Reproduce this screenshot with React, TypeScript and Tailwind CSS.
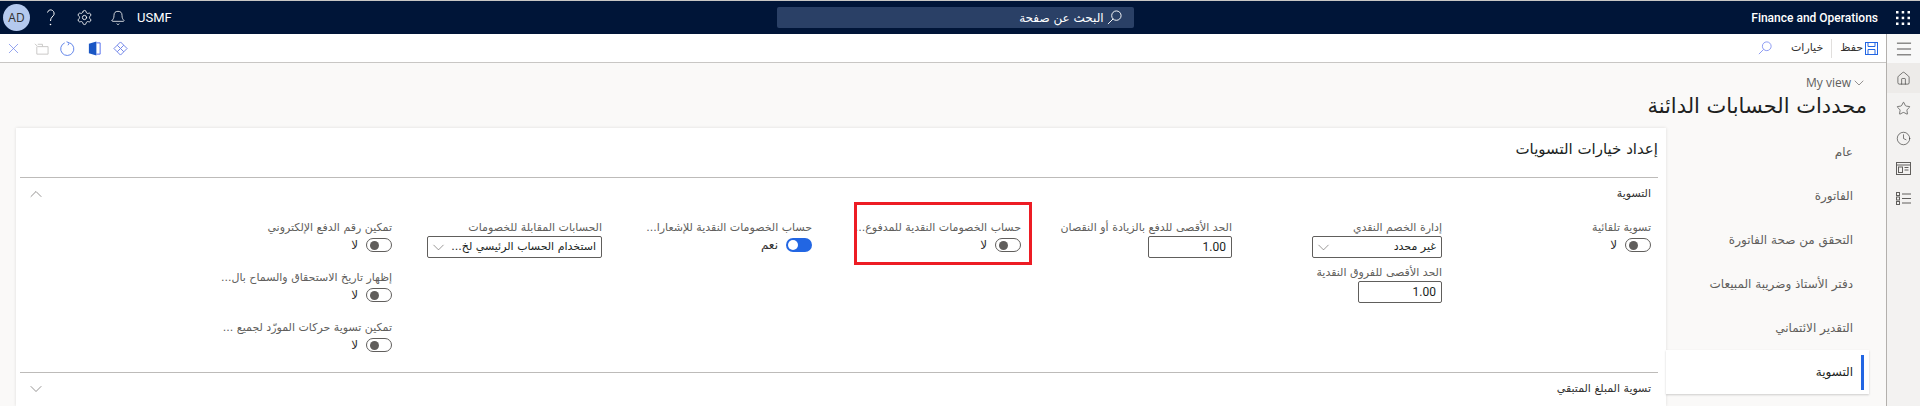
import { Bell, ChevronDown, ChevronUp, Clock, Home, Menu, Settings, Star, X } from "lucide-react"

const navItems = ["عام", "الفاتورة", "التحقق من صحة الفاتورة", "دفتر الأستاذ وضريبة المبيعات", "التقدير الائتماني"]

function SearchGlyph({ className }: { className: string }) {
  return (
    <svg viewBox="0 0 16 16" className={className} fill="none" stroke="currentColor">
      <circle cx="10" cy="6" r="5" />
      <path d="M6.500 9.500L1 15" />
    </svg>
  )
}

function Label({ text }: { text: string }) {
  return <div className="h-[17px] whitespace-nowrap text-[11px] leading-[17px] text-[#605e5c]">{text}</div>
}

function ToggleField({ label, on = false }: { label: string; on?: boolean }) {
  return (
    <div className="mb-[15px]">
      <Label text={label} />
      <div className="flex h-[18px] items-center gap-[8px]">
        {on ? (
          <span className="flex h-[14px] w-[26px] items-center justify-end rounded-full bg-[#2266e3] pr-[12px] pl-[2px]">
            <span className="size-[10px] shrink-0 rounded-full bg-white" />
          </span>
        ) : (
          <span className="flex h-[14px] w-[26px] items-center justify-end rounded-full border border-[#605e5c] bg-white pl-[3px]">
            <span className="mr-auto size-[9px] rounded-full bg-[#605e5c]" />
          </span>
        )}
        <span className="text-[12px] leading-none text-[#323130]">{on ? "نعم" : "لا"}</span>
      </div>
    </div>
  )
}

function InputField({ label, value }: { label: string; value: string }) {
  return (
    <div className="mb-[6px]">
      <Label text={label} />
      <div className="flex h-[22px] w-[84px] items-center rounded-[2px] border border-[#605e5c] bg-white px-[5px] font-['Roboto'] text-[12px] text-[#201f1e]">
        {value}
      </div>
    </div>
  )
}

function SelectField({ label, value, width }: { label: string; value: string; width: string }) {
  return (
    <div className="mb-[6px]">
      <Label text={label} />
      <div className={`flex h-[22px] items-center justify-between rounded-[2px] border border-[#605e5c] bg-white pr-[5px] pl-[1px] text-[11px] text-[#201f1e] ${width}`}>
        <span className="whitespace-nowrap">{value}</span>
        <ChevronDown size={19} strokeWidth={0.8} className="text-[#605e5c]" />
      </div>
    </div>
  )
}

function TopBar() {
  return (
    <div dir="ltr" className="flex h-[34px] items-center border-t border-[#c8c6c4] bg-[#001538] text-white">
      <div className="ml-[3px] flex size-[27px] items-center justify-center rounded-full bg-[#b4c9ee] font-['Open_Sans'] text-[12px] text-[#323130]">AD</div>
      <svg viewBox="0 0 10 18" className="ml-[16px] h-[18px] w-[10px]" fill="none" stroke="white" strokeWidth="1">
        <path d="M1.500 3.500C2 1.500 4 .5 5.500 1S8.500 3 8 5.500C7.500 7.500 4.500 8 4.500 12" />
        <circle cx="4.500" cy="15.500" r=".8" fill="white" stroke="none" />
      </svg>
      <Settings size={17} strokeWidth={1.2} className="ml-[20px]" />
      <Bell size={16} strokeWidth={1.2} className="ml-[17px]" />
      <span className="ml-[11px] font-['Roboto'] text-[13px]">USMF</span>
      <div className="ml-[605px] flex h-[21px] w-[357px] items-center justify-end rounded-[2px] bg-[#2a4066] pr-[12px] text-[12px]">
        <span dir="rtl">البحث عن صفحة</span>
        <SearchGlyph className="ml-[3px] size-[15px]" />
      </div>
      <span className="ml-auto font-['Roboto'] text-[12px] font-medium">Finance and Operations</span>
      <svg viewBox="0 0 14 14" className="mr-[10px] ml-[18px] size-[14px]" fill="white">
        <rect x="0" y="0" width="2.500" height="2.500" />
        <rect x="5.700" y="0" width="2.500" height="2.500" />
        <rect x="11.500" y="0" width="2.500" height="2.500" />
        <rect x="0" y="5.700" width="2.500" height="2.500" />
        <rect x="5.700" y="5.700" width="2.500" height="2.500" />
        <rect x="11.500" y="5.700" width="2.500" height="2.500" />
        <rect x="0" y="11.500" width="2.500" height="2.500" />
        <rect x="5.700" y="11.500" width="2.500" height="2.500" />
        <rect x="11.500" y="11.500" width="2.500" height="2.500" />
      </svg>
    </div>
  )
}

function Toolbar() {
  return (
    <div dir="ltr" className="flex h-[29px] items-center border-b border-[#c8c6c4] bg-white">
      <X size={17} strokeWidth={1} className="ml-[5px] text-[#6a7fe8]" />
      <svg viewBox="0 0 16 16" className="ml-[12px] size-[15px]" fill="none" stroke="#c8c6c4">
        <path d="M1 3l3 3h11v8H3V6" />
        <path d="M4 3.500h5V6" />
      </svg>
      <svg viewBox="0 0 16 16" className="ml-[11px] size-[15px]" fill="none" stroke="#5b7fe8">
        <path d="M5 2a7 7 0 1 0 5.500 0" />
        <path d="M7 .8L10 2 8.500 4.500" />
      </svg>
      <svg viewBox="0 0 16 16" className="ml-[12px] size-[15px]">
        <path d="M2 3l8-2.500v15L2 13z" fill="#1a56c4" />
        <path d="M10 2h4v12h-4" fill="none" stroke="#4f6bed" />
      </svg>
      <svg viewBox="0 0 16 16" className="ml-[11px] size-[15px]" fill="none" stroke="#6a7fe8">
        <path d="M8 1l3.500 3.500L8 8 4.500 4.500zM8 8l3.500 3.500L8 15l-3.500-3.500zM4.500 4.500L1 8l3.500 3.500M11.500 4.500L15 8l-3.500 3.500" />
      </svg>
      <SearchGlyph className="ml-auto size-[14px] text-[#7f8ff0]" />
      <span dir="rtl" className="ml-[19px] text-[11px] text-[#323130]">خيارات</span>
      <span className="mx-[8px] h-[19px] w-px bg-[#e1dfdd]" />
      <span dir="rtl" className="text-[11px] text-[#323130]">حفظ</span>
      <svg viewBox="0 0 13 13" className="mr-[8px] ml-[2px] size-[13px]" fill="none" stroke="#2266e3">
        <rect x=".5" y=".5" width="12" height="12" />
        <path d="M3 .5v4h7v-4M3 12.500V7.500h7v5" />
      </svg>
    </div>
  )
}

function Rail() {
  return (
    <div className="flex w-[34px] flex-col items-center border-l border-[#b3b0ad] bg-[#f3f2f1] text-[#323130]">
      <div className="flex h-[29px] w-full items-center justify-center bg-[#f8f8f8]">
        <Menu size={20} strokeWidth={1} />
      </div>
      <div className="flex h-[30px] w-full items-center justify-center bg-[#edebe9]">
        <Home size={15} strokeWidth={1} />
      </div>
      <div className="flex h-[30px] items-center justify-center"><Star size={15} strokeWidth={1} /></div>
      <div className="flex h-[30px] items-center justify-center"><Clock size={15} strokeWidth={1} /></div>
      <div className="flex h-[30px] items-center justify-center">
        <svg viewBox="0 0 15 13" className="h-[13px] w-[15px]" fill="none" stroke="#605e5c">
          <rect x=".5" y=".5" width="14" height="12" />
          <path d="M1 3h13" />
          <rect x="2.500" y="5" width="4" height="5.500" />
          <path d="M8.500 5.500h4M8.500 8h4" />
        </svg>
      </div>
      <div className="flex h-[30px] items-center justify-center">
        <svg viewBox="0 0 15 13" className="h-[13px] w-[15px]" fill="none" stroke="#605e5c">
          <rect x=".5" y=".5" width="3" height="3" />
          <rect x=".5" y="5" width="3" height="3" />
          <rect x=".5" y="9.500" width="3" height="3" />
          <path d="M6 2h9M6 6.500h9M6 11h9" />
        </svg>
      </div>
    </div>
  )
}

export default function App() {
  return (
    <div className="flex h-[406px] w-[1920px] flex-col overflow-hidden bg-[#faf9f8] font-['DejaVu_Sans','Noto_Sans',sans-serif]">
      <TopBar />
      <div className="flex min-h-0 flex-1">
        <div className="flex min-w-0 flex-1 flex-col">
          <Toolbar />
          <div dir="rtl" className="pt-[12px] pr-[19px]">
            <div className="flex h-[16px] items-center font-['Open_Sans'] text-[12px] text-[#605e5c]">
              <ChevronDown size={16} strokeWidth={1} />
              <span dir="ltr">My view</span>
            </div>
            <h1 className="h-[37px] text-[21px] leading-[30px] text-[#201f1e]">محددات الحسابات الدائنة</h1>
          </div>
          <div dir="rtl" className="flex min-h-0 flex-1">
            <div className="w-[220px] shrink-0 pt-[2px] pr-[17px]">
              {navItems.map((item) => (
                <div key={item} className="flex h-[44px] items-center pr-[16px] text-[12px] text-[#605e5c]">{item}</div>
              ))}
              <div className="relative flex h-[44px] w-[203px] items-center bg-white pr-[16px] text-[12px] font-medium text-[#201f1e] shadow-[0_1px_2px_rgba(0,0,0,0.18)]">
                <span className="absolute top-[5px] right-[5px] h-[35px] w-[3px] bg-[#2266e3]" />
                التسوية
              </div>
            </div>
            <div className="ml-[16px] flex-1 overflow-hidden bg-white pr-[8px] pl-[4px] shadow-[0_0_3px_rgba(0,0,0,0.12)]">
              <div className="flex h-[50px] items-center border-b border-[#bdbbb9] pb-[7px] text-[15px] leading-none text-[#201f1e]">إعداد خيارات التسويات</div>
              <div className="flex h-[32px] items-center justify-between pr-[7px] text-[11px] font-medium text-[#323130]">
                التسوية
                <ChevronUp size={20} strokeWidth={0.8} className="ml-[6px] text-[#605e5c]" />
              </div>
              <div className="mt-[9px] flex h-[154px] border-b border-[#bdbbb9] pr-[7px]">
                <div className="w-[209px]">
                  <ToggleField label="تسوية تلقائية" />
                </div>
                <div className="w-[210px]">
                  <SelectField label="إدارة الخصم النقدي" value="غير محدد" width="w-[130px]" />
                  <InputField label="الحد الأقصى للفروق النقدية" value="1.00" />
                </div>
                <div className="w-[211px]">
                  <InputField label="الحد الأقصى للدفع بالزيادة أو النقصان" value="1.00" />
                </div>
                <div className="relative w-[209px]">
                  <span className="absolute top-[-17px] right-[-11px] h-[63px] w-[178px] border-[3px] border-[#ed1c24]" />
                  <ToggleField label="حساب الخصومات النقدية للمدفوع..." />
                </div>
                <div className="w-[210px]">
                  <ToggleField label="حساب الخصومات النقدية للإشعارا..." on />
                </div>
                <div className="w-[210px]">
                  <SelectField label="الحسابات المقابلة للخصومات" value="استخدام الحساب الرئيسي لخ..." width="w-[175px]" />
                </div>
                <div>
                  <ToggleField label="تمكين رقم الدفع الإلكتروني" />
                  <ToggleField label="إظهار تاريخ الاستحقاق والسماح بال..." />
                  <ToggleField label="تمكين تسوية حركات المورّد لجميع ..." />
                </div>
              </div>
              <div className="flex h-[32px] items-center justify-between pr-[7px] text-[11px] font-medium text-[#323130]">
                تسوية المبلغ المتبقي
                <ChevronDown size={20} strokeWidth={0.8} className="ml-[6px] text-[#605e5c]" />
              </div>
            </div>
          </div>
        </div>
        <Rail />
      </div>
    </div>
  )
}
